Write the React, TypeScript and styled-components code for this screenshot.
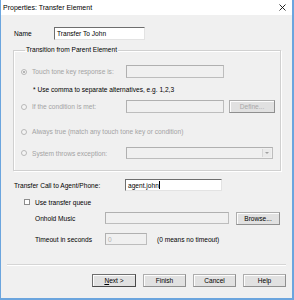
import React from 'react';
import styled, { createGlobalStyle } from 'styled-components';

const GlobalStyle = createGlobalStyle`
  html, body {
    margin: 0;
    padding: 0;
    background: #ffffff;
  }
  body {
    font-family: "Liberation Sans", Arial, sans-serif;
    font-size: 6.6px;
    color: #000;
  }
`;

const Frame = styled.div`
  width: 294px;
  height: 300px;
  box-sizing: border-box;
  border-left: 1px solid #6ba5de;
  border-right: 2px solid #6ba5de;
  border-bottom: 2px solid #6ba5de;
  background: #f0f0f0;
  display: flex;
  flex-direction: column;
`;

const TitleBar = styled.div`
  height: 15px;
  background: #ffffff;
  display: flex;
  align-items: center;
  justify-content: space-between;
  padding: 0 6px 0 2px;
  font-size: 7px;
`;

const CloseIcon = styled.svg`
  width: 7px;
  height: 7px;
  display: block;
`;

const Body = styled.div`
  flex: 1;
  display: flex;
  flex-direction: column;
  padding: 12px 0 0 12px;
`;

const Row = styled.div<{ $top: number; $left?: number; $h?: number }>`
  display: flex;
  align-items: center;
  height: ${(p) => p.$h ?? 12}px;
  margin-top: ${(p) => p.$top}px;
  margin-left: ${(p) => p.$left ?? 0}px;
  white-space: nowrap;
`;

const Label = styled.span<{ $w: number; $disabled?: boolean }>`
  width: ${(p) => p.$w}px;
  flex: none;
  display: flex;
  align-items: center;
  color: ${(p) => (p.$disabled ? '#a3a3a3' : '#000')};
`;

const TextBox = styled.div<{ $w: number; $disabled?: boolean }>`
  width: ${(p) => p.$w}px;
  height: 100%;
  box-sizing: border-box;
  flex: none;
  display: flex;
  align-items: center;
  padding-left: 2px;
  background: ${(p) => (p.$disabled ? '#f0f0f0' : '#ffffff')};
  border: 1px solid ${(p) => (p.$disabled ? '#bdbdbd' : '#e3e3e3')};
  border-top-color: ${(p) => (p.$disabled ? '#b0b0b0' : '#6e6e6e')};
  border-left-color: ${(p) => (p.$disabled ? '#b0b0b0' : '#6e6e6e')};
  color: ${(p) => (p.$disabled ? '#b0b0b0' : '#000')};
`;

const Caret = styled.span`
  display: inline-block;
  width: 1px;
  height: 8px;
  background: #000;
  margin-left: 0.5px;
`;

const Button = styled.div<{ $w: number; $default?: boolean; $disabled?: boolean }>`
  width: ${(p) => p.$w}px;
  height: 13px;
  box-sizing: border-box;
  flex: none;
  display: flex;
  align-items: center;
  justify-content: center;
  background: #e1e1e1;
  border: 1px solid ${(p) => (p.$default ? '#6f6f6f' : '#adadad')};
  border-right-color: ${(p) => (p.$default ? '#4a4a4a' : '#8f8f8f')};
  border-bottom-color: ${(p) => (p.$default ? '#4a4a4a' : '#8f8f8f')};
  box-shadow: inset 1px 1px 0 #fdfdfd;
  color: ${(p) => (p.$disabled ? '#a8a8a8' : '#000')};
`;

const Group = styled.fieldset`
  width: 268px;
  box-sizing: border-box;
  margin: 6px 0 0 0;
  padding: 0 0 11px 7px;
  border: 1px solid #d0d0d0;
  box-shadow: 1px 1px 0 #ffffff, inset 1px 1px 0 #ffffff;
  min-inline-size: 0;
`;

const Legend = styled.legend`
  padding: 0 1px;
  margin-left: 4px;
  line-height: 8px;
`;

const Radio = styled.span<{ $checked?: boolean }>`
  width: 6px;
  height: 6px;
  box-sizing: border-box;
  border-radius: 50%;
  border: 1px solid #b8b8b8;
  background: #f4f4f4;
  flex: none;
  margin-right: 5px;
  display: flex;
  align-items: center;
  justify-content: center;
  &::after {
    content: '';
    width: 2px;
    height: 2px;
    border-radius: 50%;
    background: ${(p) => (p.$checked ? '#a0a0a0' : 'transparent')};
  }
`;

const Check = styled.span`
  width: 6px;
  height: 6px;
  box-sizing: border-box;
  border: 1px solid #8c8c8c;
  background: #ffffff;
  flex: none;
  margin-right: 5px;
`;

const Hint = styled.div`
  height: 8px;
  line-height: 8px;
  margin: 8px 0 0 12px;
`;

const Combo = styled(TextBox)`
  justify-content: flex-end;
  padding: 1px;
`;

const ComboButton = styled.span`
  width: 9px;
  height: 100%;
  box-sizing: border-box;
  background: #eaeaea;
  border-left: 1px solid #d6d6d6;
  display: flex;
  align-items: center;
  justify-content: center;
  &::after {
    content: '';
    border-left: 2px solid transparent;
    border-right: 2px solid transparent;
    border-top: 2px solid #a0a0a0;
  }
`;

const Separator = styled.div`
  height: 1px;
  width: 279px;
  margin: 19px 0 0 -6px;
  background: #d5d5d5;
  border-bottom: 1px solid #ffffff;
`;

const ButtonBar = styled.div`
  display: flex;
  gap: 7px;
  margin: 8px 0 0 79px;
`;

const Underline = styled.span`
  text-decoration: underline;
`;

export default function App() {
  return (
    <>
      <GlobalStyle />
      <Frame>
        <TitleBar>
          <span>Properties: Transfer Element</span>
          <CloseIcon viewBox="0 0 7 7">
            <path d="M0.5 0.5 L6.5 6.5 M6.5 0.5 L0.5 6.5" stroke="#111" strokeWidth="0.9" />
          </CloseIcon>
        </TitleBar>
        <Body>
          <Row $top={0} $left={1} $h={13}>
            <Label $w={40}>Name</Label>
            <TextBox $w={91}>Transfer To John</TextBox>
          </Row>

          <Group>
            <Legend>Transition from Parent Element</Legend>
            <Row $top={11} $h={13}>
              <Label $w={105} $disabled>
                <Radio $checked />
                Touch tone key response is:
              </Label>
              <TextBox $w={98} $disabled />
            </Row>
            <Hint>* Use comma to separate alternatives, e.g. 1,2,3</Hint>
            <Row $top={6} $h={13}>
              <Label $w={105} $disabled>
                <Radio />
                If the condition is met:
              </Label>
              <TextBox $w={98} $disabled />
              <Button $w={46} $disabled style={{ marginLeft: 5 }}>Define...</Button>
            </Row>
            <Row $top={12} $h={13}>
              <Label $w={220} $disabled>
                <Radio />
                Always true (match any touch tone key or condition)
              </Label>
            </Row>
            <Row $top={9} $h={12}>
              <Label $w={105} $disabled>
                <Radio />
                System throws exception:
              </Label>
              <Combo $w={147} $disabled>
                <ComboButton />
              </Combo>
            </Row>
          </Group>

          <Row $top={8} $left={1} $h={12}>
            <Label $w={111}>Transfer Call to Agent/Phone:</Label>
            <TextBox $w={97}>
              agent.john
              <Caret />
            </TextBox>
          </Row>
          <Row $top={6} $left={11} $h={10}>
            <Check />
            <span>Use transfer queue</span>
          </Row>
          <Row $top={5} $left={22} $h={12}>
            <Label $w={70}>Onhold Music</Label>
            <TextBox $w={124} $disabled />
            <Button $w={44} style={{ marginLeft: 7 }}>Browse...</Button>
          </Row>
          <Row $top={9} $left={22} $h={12}>
            <Label $w={70}>Timeout in seconds</Label>
            <TextBox $w={42} $disabled>0</TextBox>
            <span style={{ marginLeft: 10 }}>(0 means no timeout)</span>
          </Row>

          <Separator />

          <ButtonBar>
            <Button $w={44} $default>
              <span>
                <Underline>N</Underline>ext &gt;
              </span>
            </Button>
            <Button $w={43}>Finish</Button>
            <Button $w={43}>Cancel</Button>
            <Button $w={43}>Help</Button>
          </ButtonBar>
        </Body>
      </Frame>
    </>
  );
}
